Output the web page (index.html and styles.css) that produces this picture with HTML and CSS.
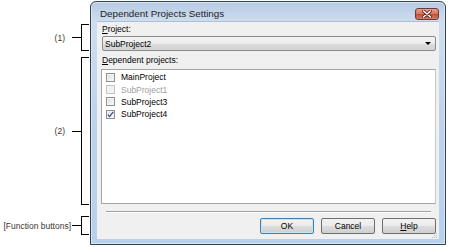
FILE: index.html
```html
<!DOCTYPE html>
<html lang="en">
<head>
    <meta charset="UTF-8">
    <title>Dependent Projects Settings</title>
    <link rel="stylesheet" href="styles.css">
</head>
<body>
    <div class="page">
        <div class="notes">
            <div class="note note-project">
                <span class="note-label">(1)</span>
                <span class="note-dash"></span>
                <span class="note-bracket"></span>
            </div>
            <div class="note note-list">
                <span class="note-label">(2)</span>
                <span class="note-dash"></span>
                <span class="note-bracket"></span>
            </div>
            <div class="note note-buttons">
                <span class="note-label wide">[Function buttons]</span>
                <span class="note-dash"></span>
                <span class="note-bracket"></span>
            </div>
        </div>

        <div class="dialog">
            <div class="titlebar">
                <span class="title">Dependent Projects Settings</span>
                <span class="close-btn">
                    <svg width="10" height="8" viewBox="0 0 10 8">
                        <path d="M1.5 1 L8.5 7 M8.5 1 L1.5 7" stroke="#5a1a1a" stroke-width="3" stroke-linecap="round"/>
                        <path d="M1.5 1 L8.5 7 M8.5 1 L1.5 7" stroke="#fff" stroke-width="1.6" stroke-linecap="round"/>
                    </svg>
                </span>
            </div>
            <div class="client">
                <div class="field-label"><u>P</u>roject:</div>
                <div class="combo">
                    <span>SubProject2</span>
                    <span class="combo-arrow"></span>
                </div>
                <div class="field-label label-list"><u>D</u>ependent projects:</div>
                <div class="listbox">
                    <div class="list-item">
                        <span class="check"></span>
                        <span>MainProject</span>
                    </div>
                    <div class="list-item disabled">
                        <span class="check"></span>
                        <span>SubProject1</span>
                    </div>
                    <div class="list-item">
                        <span class="check"></span>
                        <span>SubProject3</span>
                    </div>
                    <div class="list-item">
                        <span class="check checked">
                            <svg width="7" height="7" viewBox="0 0 7 7">
                                <path d="M0.8 3.6 L2.6 5.6 L6.3 0.8" fill="none" stroke="#3b4f8c" stroke-width="1.3"/>
                            </svg>
                        </span>
                        <span>SubProject4</span>
                    </div>
                </div>
                <div class="separator"></div>
                <div class="buttons">
                    <button class="btn default">OK</button>
                    <button class="btn">Cancel</button>
                    <button class="btn"><u>H</u>elp</button>
                </div>
                <svg class="grip" width="6" height="6" viewBox="0 0 6 6">
                    <rect x="4" y="0" width="1" height="1" fill="#b8b8b8"/>
                    <rect x="2" y="2" width="1" height="1" fill="#b8b8b8"/>
                    <rect x="4" y="2" width="1" height="1" fill="#b8b8b8"/>
                    <rect x="0" y="4" width="1" height="1" fill="#b8b8b8"/>
                    <rect x="2" y="4" width="1" height="1" fill="#b8b8b8"/>
                    <rect x="4" y="4" width="1" height="1" fill="#b8b8b8"/>
                </svg>
            </div>
        </div>
    </div>
</body>
</html>
```

FILE: styles.css
```css
body {
    margin: 0;
    background: #fff;
    font-family: "Liberation Sans", Arial, sans-serif;
    font-size: 8.5px;
    color: #000;
}

.page {
    display: flex;
    width: 474px;
    height: 247px;
}

/* annotations on the left */

.notes {
    width: 90px;
    flex: none;
}

.note {
    display: flex;
    align-items: center;
}

.note-project {
    margin-top: 24px;
    height: 27px;
}

.note-list {
    margin-top: 6px;
    height: 148px;
}

.note-buttons {
    margin-top: 11px;
    height: 19px;
}

.note-label {
    width: 72px;
    box-sizing: border-box;
    padding-right: 7px;
    text-align: right;
    color: #3a3530;
    white-space: nowrap;
}

.note-label.wide {
    padding-right: 1px;
}

.note-dash {
    width: 9px;
    height: 1px;
    background: #000;
}

.note-bracket {
    width: 8px;
    height: 100%;
    box-sizing: border-box;
    border: 1px solid #000;
    border-right: none;
}

/* dialog */

.dialog {
    margin-top: 1px;
    width: 356px;
    height: 244px;
    box-sizing: border-box;
    border: 1px solid #33414f;
    border-radius: 6px 6px 0 0;
    background: linear-gradient(#b6cae2 0px, #cfdeef 20px, #bdd3ec 120px, #b7d0ee 100%);
    box-shadow: inset 0 0 0 1px #d8e6f5;
    display: flex;
    flex-direction: column;
}

.titlebar {
    height: 20px;
    display: flex;
    justify-content: space-between;
    align-items: flex-start;
    flex: none;
}

.title {
    padding: 6px 0 0 9px;
    font-size: 9.8px;
    line-height: 12px;
    color: #1e1e1e;
}

.close-btn {
    margin: 6px 6px 0 0;
    width: 24px;
    height: 12px;
    box-sizing: border-box;
    border: 1px solid #6b3a3a;
    border-radius: 3px;
    background: linear-gradient(#e9a08e, #d6705e 50%, #c44a36 51%, #d77b64);
    display: flex;
    justify-content: center;
    align-items: center;
}

.client {
    position: relative;
    margin: 0 6px;
    height: 217px;
    box-sizing: border-box;
    padding: 0 3px 0 4px;
    background: #f0f0f0;
    box-shadow: 0 -1px 0 #aebfd4;
    display: flex;
    flex-direction: column;
}

.field-label {
    margin-top: 2px;
    margin-left: 1px;
    line-height: 11px;
}

.label-list {
    margin-top: 4px;
}

.combo {
    margin-top: 1px;
    margin-left: 1px;
    height: 15px;
    box-sizing: border-box;
    border: 1px solid #8b8b8b;
    border-radius: 2px;
    background: linear-gradient(#f4f4f4, #ebebeb 50%, #dddddd 51%, #d2d2d2);
    display: flex;
    align-items: center;
    justify-content: space-between;
    padding: 0 4px 0 2px;
}

.combo-arrow {
    width: 0;
    height: 0;
    border-left: 3px solid transparent;
    border-right: 3px solid transparent;
    border-top: 3px solid #000;
}

.listbox {
    margin-top: 3px;
    height: 135px;
    box-sizing: border-box;
    border: 1px solid #a5a5a5;
    border-right-color: #c8c8c8;
    background: #fff;
    padding: 1px 0 0 4px;
}

.list-item {
    height: 12.4px;
    display: flex;
    align-items: center;
    gap: 6px;
}

.list-item.disabled {
    color: #a0a0a0;
}

.check {
    width: 9px;
    height: 9px;
    box-sizing: border-box;
    border: 1px solid #8e8f8f;
    background: linear-gradient(135deg, #dcdcdc, #fbfbfb);
    box-shadow: inset 0 0 0 1px #f4f4f4;
    display: flex;
    align-items: center;
    justify-content: center;
}

.disabled .check {
    border-color: #c4c4c4;
    background: #f0f0f0;
}

.separator {
    margin: 7px 5px 0 5px;
    height: 2px;
    box-sizing: border-box;
    border-top: 1px solid #a0a0a0;
    border-bottom: 1px solid #fff;
}

.buttons {
    margin-top: 5px;
    display: flex;
    justify-content: flex-end;
    gap: 7px;
}

.btn {
    width: 54px;
    height: 16px;
    box-sizing: border-box;
    padding: 0;
    border: 1px solid #707070;
    border-radius: 2px;
    background: linear-gradient(#f2f2f2, #ebebeb 50%, #dddddd 51%, #cfcfcf);
    font-family: "Liberation Sans", Arial, sans-serif;
    font-size: 8.5px;
    color: #000;
}

.btn.default {
    border-color: #3c7fb1;
    box-shadow: inset 0 0 0 1px #c6e6f7;
}

.grip {
    position: absolute;
    right: 1px;
    bottom: 0;
}
```
